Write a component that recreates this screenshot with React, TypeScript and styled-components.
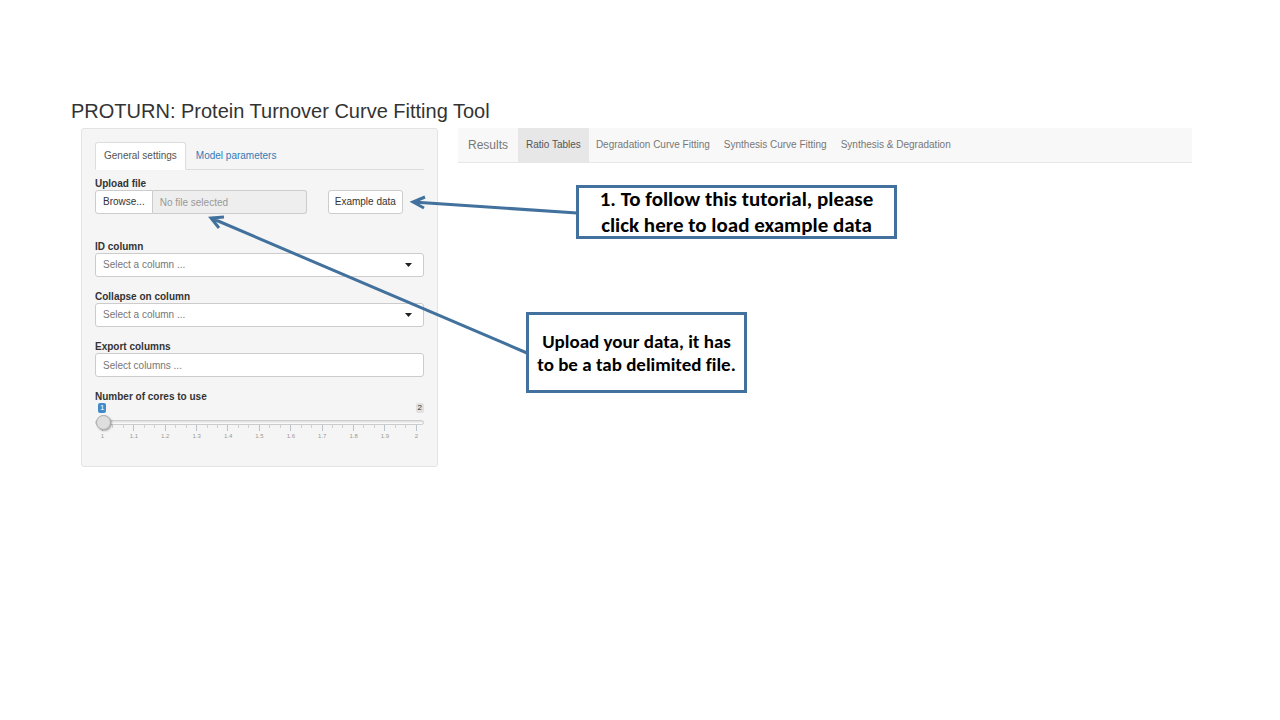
import React from 'react';
import styled, { createGlobalStyle } from 'styled-components';

const GlobalStyle = createGlobalStyle`
  *, *::before, *::after { box-sizing: border-box; }
  body {
    margin: 0;
    background: #fff;
    color: #333;
    font-family: 'Liberation Sans', Arial, sans-serif;
    font-size: 10px;
    line-height: 14px;
  }
  button, input, select { font: inherit; color: inherit; }
`;

const Page = styled.div`
  position: relative;
  padding: 99px 78px 40px 71px;
`;

const Title = styled.h1`
  margin: 0 0 5px;
  font-size: 20px;
  font-weight: 400;
  line-height: 24px;
`;

const Columns = styled.div`
  display: grid;
  grid-template-columns: minmax(0, 1fr) minmax(0, 2fr);
  align-items: start;
`;

const Sidebar = styled.form`
  margin: 0 10px;
  padding: 13px 13px 25px;
  background: #f5f5f5;
  border: 1px solid #e3e3e3;
  border-radius: 3px;
`;

const Tabs = styled.div`
  display: flex;
  gap: 1px;
  margin-bottom: 7px;
  border-bottom: 1px solid #ddd;
`;

const Tab = styled.button<{ $active?: boolean }>`
  height: 28px;
  margin-bottom: -1px;
  padding: 0 8px;
  border: 1px solid ${p => (p.$active ? '#ddd' : 'transparent')};
  border-bottom-color: ${p => (p.$active ? '#fff' : 'transparent')};
  border-radius: 3px 3px 0 0;
  background: ${p => (p.$active ? '#fff' : 'transparent')};
  color: ${p => (p.$active ? '#555' : '#337ab7')};
`;

const Field = styled.div<{ $gap?: number }>`
  margin-bottom: ${p => p.$gap ?? 13}px;
`;

const Label = styled.label`
  display: block;
  height: 13px;
  font-weight: 700;
`;

const UploadRow = styled.div`
  display: grid;
  grid-template-columns: 11fr 5fr;
  gap: 21px;
  justify-items: start;
`;

const FileGroup = styled.div`
  display: flex;
  width: 100%;
`;

const Button = styled.button<{ $joined?: boolean }>`
  height: 24px;
  padding: 0 ${p => (p.$joined ? 7 : 6)}px;
  border: 1px solid #ccc;
  border-radius: ${p => (p.$joined ? '3px 0 0 3px' : '3px')};
  background: #fff;
  color: #333;
`;

const FileName = styled.input`
  flex: 1;
  min-width: 0;
  height: 24px;
  padding: 0 7px;
  border: 1px solid #ccc;
  border-left: 0;
  border-radius: 0 3px 3px 0;
  background: #eee;
  &::placeholder { color: #999; opacity: 1; }
`;

const SelectBox = styled.div`
  display: grid;
  align-items: center;
  > * { grid-area: 1 / 1; }
  > svg { justify-self: end; margin-right: 12px; pointer-events: none; }
`;

const Select = styled.select`
  appearance: none;
  width: 100%;
  height: 24px;
  padding: 0 7px;
  border: 1px solid #ccc;
  border-radius: 3px;
  background: #fff;
  color: #777;
`;

const TextInput = styled.input`
  display: block;
  width: 100%;
  height: 24px;
  padding: 0 7px;
  border: 1px solid #ccc;
  border-radius: 3px;
  background: #fff;
  &::placeholder { color: #777; opacity: 1; }
`;

const Bounds = styled.div`
  display: flex;
  justify-content: space-between;
  padding: 0 0 0 3px;
`;

const Bound = styled.span<{ $current?: boolean }>`
  padding: 0 2px;
  border-radius: 2px;
  background: ${p => (p.$current ? '#428bca' : '#e1e1e1')};
  color: ${p => (p.$current ? '#fff' : '#333')};
  font-size: 8px;
  line-height: 10px;
`;

const Range = styled.input`
  appearance: none;
  display: block;
  width: 100%;
  height: 15px;
  margin: 2px 0 0;
  background: transparent;
  position: relative;
  z-index: 1;
  &::-webkit-slider-runnable-track {
    height: 5px;
    border: 1px solid #ccc;
    border-radius: 4px;
    background: linear-gradient(#ddd, #fff);
  }
  &::-webkit-slider-thumb {
    appearance: none;
    width: 15px;
    height: 15px;
    margin-top: -6px;
    border: 1px solid #aaa;
    border-radius: 50%;
    background: #dedede;
    box-shadow: 1px 1px 2px rgba(0, 0, 0, 0.3);
  }
`;

const Ticks = styled.div`
  display: flex;
  justify-content: space-between;
  height: 6px;
  margin: -5px 7px 0;
`;

const Tick = styled.i<{ $major: boolean }>`
  width: 1px;
  height: ${p => (p.$major ? 6 : 3)}px;
  background: ${p => (p.$major ? '#bbc3cc' : '#ccd1d6')};
`;

const Scale = styled.div`
  display: flex;
  justify-content: space-between;
  color: #999;
  font-size: 6px;
  line-height: 10px;
  span { width: 15px; text-align: center; }
`;

const Navbar = styled.nav`
  display: flex;
  height: 35px;
  margin: 0 10px;
  background: #f8f8f8;
  border-bottom: 1px solid #e7e7e7;
`;

const Brand = styled.a`
  padding: 0 10px;
  color: #777;
  font-size: 12px;
  line-height: 34px;
  text-decoration: none;
`;

const NavLink = styled.a<{ $active?: boolean }>`
  padding: 0 ${p => (p.$active ? 8 : 7)}px;
  background: ${p => (p.$active ? '#e7e7e7' : 'transparent')};
  color: ${p => (p.$active ? '#555' : '#777')};
  line-height: 34px;
  text-decoration: none;
`;

const Arrows = styled.svg`
  position: absolute;
  top: 0;
  left: 0;
  z-index: 2;
  pointer-events: none;
`;

const Callout = styled.p<{ $x: number; $y: number; $w: number; $h: number; $size: number; $line: number }>`
  position: absolute;
  z-index: 3;
  left: ${p => p.$x}px;
  top: ${p => p.$y}px;
  width: ${p => p.$w}px;
  height: ${p => p.$h}px;
  margin: 0;
  display: flex;
  align-items: center;
  justify-content: center;
  border: 3px solid #41719c;
  background: #fff;
  color: #000;
  font-family: Carlito, Lato, sans-serif;
  font-size: ${p => p.$size}px;
  font-weight: 700;
  font-variant-ligatures: none;
  line-height: ${p => p.$line}px;
  text-align: center;
  white-space: nowrap;
`;

const results = ['Ratio Tables', 'Degradation Curve Fitting', 'Synthesis Curve Fitting', 'Synthesis & Degradation'];
const scale = ['1', '1.1', '1.2', '1.3', '1.4', '1.5', '1.6', '1.7', '1.8', '1.9', '2'];

function ColumnSelect({ id, label }: { id: string; label: string }) {
  return (
    <Field>
      <Label htmlFor={id}>{label}</Label>
      <SelectBox>
        <Select id={id}>
          <option>Select a column ...</option>
        </Select>
        <svg width="7" height="4" viewBox="0 0 7 4" aria-hidden="true">
          <path d="M0 0h7L3.500 4z" fill="#222" />
        </svg>
      </SelectBox>
    </Field>
  );
}

export default function App() {
  return (
    <>
      <GlobalStyle />
      <Page>
        <Title>PROTURN: Protein Turnover Curve Fitting Tool</Title>
        <Columns>
          <Sidebar onSubmit={e => e.preventDefault()}>
            <Tabs role="tablist">
              <Tab type="button" role="tab" aria-selected="true" $active>General settings</Tab>
              <Tab type="button" role="tab" aria-selected="false">Model parameters</Tab>
            </Tabs>
            <Field $gap={26}>
              <Label htmlFor="file">Upload file</Label>
              <UploadRow>
                <FileGroup>
                  <Button type="button" $joined>Browse...</Button>
                  <FileName id="file" placeholder="No file selected" readOnly />
                </FileGroup>
                <Button type="button">Example data</Button>
              </UploadRow>
            </Field>
            <ColumnSelect id="id-column" label="ID column" />
            <ColumnSelect id="collapse" label="Collapse on column" />
            <Field>
              <Label htmlFor="export">Export columns</Label>
              <TextInput id="export" placeholder="Select columns ..." />
            </Field>
            <Label htmlFor="cores">Number of cores to use</Label>
            <Bounds>
              <Bound $current>1</Bound>
              <Bound>2</Bound>
            </Bounds>
            <Range id="cores" type="range" min={1} max={2} step={1} defaultValue={1} />
            <Ticks>
              {Array.from({ length: 31 }, (_, i) => (
                <Tick key={i} $major={i % 3 === 0} />
              ))}
            </Ticks>
            <Scale>
              {scale.map(s => <span key={s}>{s}</span>)}
            </Scale>
          </Sidebar>
          <Navbar>
            <Brand href="#">Results</Brand>
            {results.map((name, i) => (
              <NavLink key={name} href="#" $active={i === 0}>{name}</NavLink>
            ))}
          </Navbar>
        </Columns>
        <Arrows width="600" height="400" viewBox="0 0 600 400" fill="none" stroke="#41719c" strokeWidth="3" aria-hidden="true">
          <path d="M577 213L413 202M425 197L413 202L424 208" />
          <path d="M527 353L211 218M224 217L211 218L219 228" />
        </Arrows>
        <Callout $x={576} $y={185} $w={321} $h={54} $size={21} $line={26}>
          1. To follow this tutorial, please<br />click here to load example data
        </Callout>
        <Callout $x={526} $y={312} $w={221} $h={81} $size={19} $line={23}>
          Upload your data, it has<br />to be a tab delimited file.
        </Callout>
      </Page>
    </>
  );
}
